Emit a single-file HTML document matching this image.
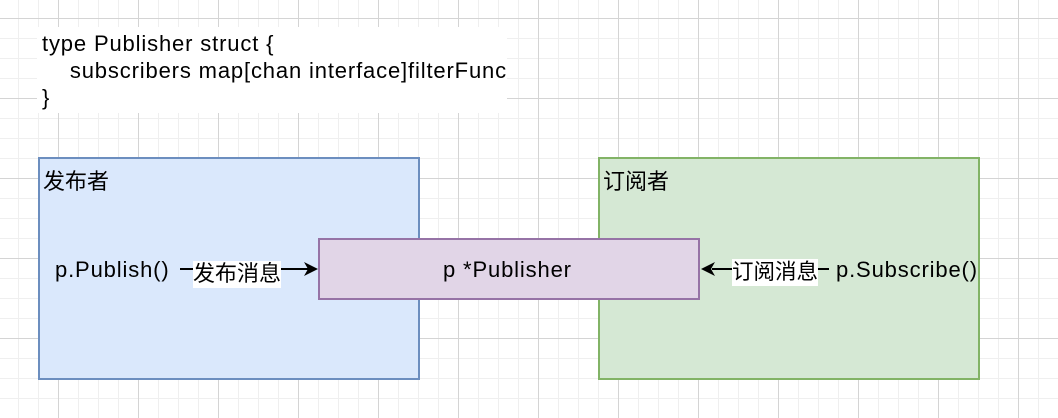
<!DOCTYPE html>
<html><head><meta charset="utf-8"><style>
body{margin:0;width:1058px;height:418px;overflow:hidden;position:relative;background:#fff;
font-family:"Liberation Sans","Noto Sans CJK SC",sans-serif;}
.grid{position:absolute;left:0;top:0;width:1058px;height:418px;
background-image:
linear-gradient(to right,#d4d4d4 1px,transparent 1px),
linear-gradient(to bottom,#d4d4d4 1px,transparent 1px),
linear-gradient(to right,#efefef 1px,transparent 1px),
linear-gradient(to bottom,#efefef 1px,transparent 1px);
background-size:80px 80px,80px 80px,20px 20px,20px 20px;
background-position:58px 18px,58px 18px,18px 18px,18px 18px;}
.abs{position:absolute}
.code{left:37px;top:27px;width:470px;height:86px;background:#fff;font-size:22px;line-height:27px;color:#000;padding-left:5px;box-sizing:border-box;padding-top:3px;white-space:nowrap;letter-spacing:0.85px}
.box{box-sizing:border-box;border:2px solid}
.lbl{font-size:22px;color:#000;white-space:nowrap;line-height:26px}
.lat{letter-spacing:0.85px}
</style></head><body>
<div class="grid"></div>
<div class="abs code">type Publisher struct {<br>&nbsp;&nbsp;&nbsp;&nbsp;subscribers map[chan interface]filterFunc<br>}</div>
<div class="abs box" style="left:38px;top:157px;width:382px;height:223px;background:#dae8fc;border-color:#6c8ebf"></div>
<div class="abs box" style="left:598px;top:157px;width:382px;height:223px;background:#d5e8d4;border-color:#82b366"></div>
<div class="abs lbl" style="left:43px;top:169px">发布者</div>
<div class="abs lbl" style="left:603px;top:169px">订阅者</div>
<div class="abs box" style="left:318px;top:238px;width:382px;height:62px;background:#e1d5e7;border-color:#9673a6"></div>
<div class="abs lbl lat" style="left:443px;top:257px">p *Publisher</div>
<div class="abs lbl lat" style="left:55px;top:257px">p.Publish()</div>
<div class="abs lbl lat" style="left:836px;top:257px">p.Subscribe()</div>
<svg class="abs" style="left:0;top:0" width="1058" height="418">
<line x1="180" y1="269" x2="308" y2="269" stroke="#000" stroke-width="2"/>
<polygon points="318,269 304,262 308,269 304,276" fill="#000"/>
<line x1="712" y1="269" x2="829" y2="269" stroke="#000" stroke-width="2"/>
<polygon points="701,269 715,262 711,269 715,276" fill="#000"/>
</svg>
<div class="abs lbl" style="left:193px;top:261px;background:#fff;height:27px;line-height:25px;font-size:22px">发布消息</div>
<div class="abs lbl" style="left:732px;top:259px;background:#fff;height:27px;line-height:27px;font-size:21.5px">订阅消息</div>
</body></html>
